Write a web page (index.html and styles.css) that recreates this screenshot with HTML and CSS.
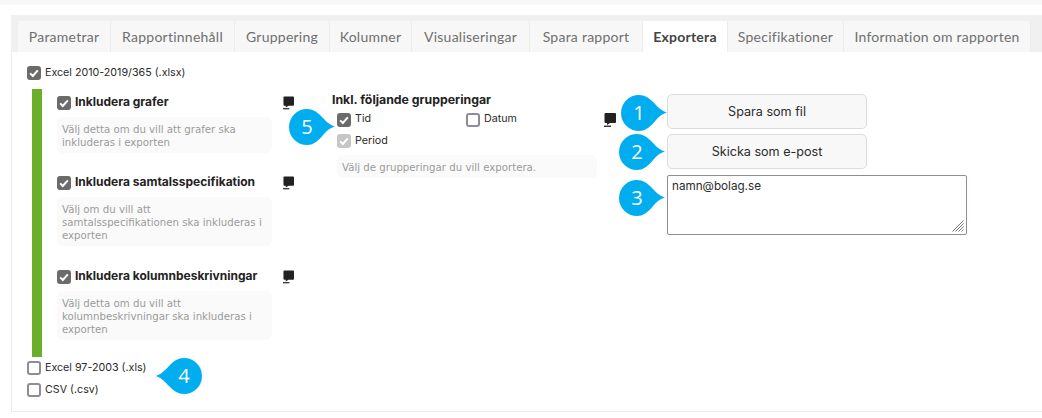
FILE: index.html
```html
<!DOCTYPE html>
<html lang="sv">
<head>
  <meta charset="UTF-8" />
  <title>Exportera rapport</title>
  <link rel="stylesheet" href="styles.css">
</head>
<body>
  <svg class="defs" width="0" height="0" aria-hidden="true">
    <symbol id="note" viewBox="0 0 12 14">
      <path d="M1.500 0h9.500a1 1 0 0 1 1 1v8a1 1 0 0 1-1 1H6L3 12V10H1.500a1 1 0 0 1-1-1V1a1 1 0 0 1 1-1z"/>
      <rect x="0" y="12.600" width="7" height="1.300"/>
    </symbol>
    <symbol id="tick" viewBox="0 0 14 14">
      <path d="M3.200 7.400l2.600 2.600 5-5.600" fill="none" stroke="#fff" stroke-width="2"/>
    </symbol>
    <symbol id="drop-right" viewBox="0 0 46 36">
      <path d="M18 0c6 0 10 3 14 7 4 4 8 9 14 10.500-6 1.500-10 6-14 11-4 4-8 7.500-14 7.500a18 18 0 0 1 0-36z"/>
    </symbol>
    <symbol id="drop-left" viewBox="0 0 46 36">
      <path d="M28 0c-6 0-10 3-14 7-4 4-8 9-14 11 6 2 10 7 14 11 4 4 8 7 14 7a18 18 0 0 0 0-36z"/>
    </symbol>
  </svg>

  <div class="topstrip"></div>

  <div class="report">
    <nav class="tabs">
      <a class="tab w-param">Parametrar</a>
      <a class="tab w-innehall">Rapportinnehåll</a>
      <a class="tab w-grupp">Gruppering</a>
      <a class="tab w-kol">Kolumner</a>
      <a class="tab w-vis">Visualiseringar</a>
      <a class="tab w-spara">Spara rapport</a>
      <a class="tab w-exp active">Exportera</a>
      <a class="tab w-spec">Specifikationer</a>
      <a class="tab w-info">Information om rapporten</a>
    </nav>

    <section class="panel">
      <label class="check format">
        <span class="box on"><svg><use href="#tick"/></svg></span>
        Excel 2010-2019/365 (.xlsx)
      </label>

      <div class="xlsx-options">
        <div class="col-includes">
          <div class="include">
            <div class="include-head">
              <label class="check strong">
                <span class="box on"><svg><use href="#tick"/></svg></span>
                Inkludera grafer
              </label>
              <svg class="note"><use href="#note"/></svg>
            </div>
            <p class="help">Välj detta om du vill att grafer ska inkluderas i exporten</p>
          </div>
          <div class="include">
            <div class="include-head">
              <label class="check strong">
                <span class="box on"><svg><use href="#tick"/></svg></span>
                Inkludera samtalsspecifikation
              </label>
              <svg class="note"><use href="#note"/></svg>
            </div>
            <p class="help">Välj om du vill att samtalsspecifikationen ska inkluderas i exporten</p>
          </div>
          <div class="include last">
            <div class="include-head">
              <label class="check strong">
                <span class="box on"><svg><use href="#tick"/></svg></span>
                Inkludera kolumnbeskrivningar
              </label>
              <svg class="note"><use href="#note"/></svg>
            </div>
            <p class="help">Välj detta om du vill att kolumnbeskrivningar ska inkluderas i exporten</p>
          </div>
        </div>

        <div class="col-groupings">
          <h3>Inkl. följande grupperingar</h3>
          <div class="grouping-checks">
            <label class="check">
              <span class="box on"><svg><use href="#tick"/></svg></span>
              Tid
            </label>
            <label class="check">
              <span class="box"></span>
              Datum
            </label>
            <label class="check format">
              <span class="box disabled"><svg><use href="#tick"/></svg></span>
              Period
            </label>
          </div>
          <p class="help wide">Välj de grupperingar du vill exportera.</p>
        </div>

        <svg class="note note-groupings"><use href="#note"/></svg>

        <div class="col-actions">
          <button class="btn" type="button">Spara som fil</button>
          <button class="btn" type="button">Skicka som e-post</button>
          <div class="mailbox">
            <span>namn@bolag.se</span>
            <svg class="grip" viewBox="0 0 12 12"><path d="M0.500 11.500l11-11M3.500 11.500l8-8M6.500 11.500l5-5M9.500 11.500l2-2" stroke="#777" fill="none"/></svg>
          </div>
        </div>
      </div>

      <div class="other-formats">
        <label class="check format">
          <span class="box"></span>
          Excel 97-2003 (.xls)
        </label>
        <label class="check format">
          <span class="box"></span>
          CSV (.csv)
        </label>
      </div>
    </section>
  </div>

  <!-- numbered callouts on top of the screenshot -->
  <div class="callout c1"><svg><use href="#drop-right"/></svg><span>1</span></div>
  <div class="callout c2"><svg><use href="#drop-right"/></svg><span>2</span></div>
  <div class="callout c3"><svg><use href="#drop-right"/></svg><span>3</span></div>
  <div class="callout flip c4"><svg><use href="#drop-left"/></svg><span>4</span></div>
  <div class="callout c5"><svg><use href="#drop-right"/></svg><span>5</span></div>
</body>
</html>
```

FILE: styles.css
```css
:root {
  --color-text: #2b2b2b;
  --color-muted: #9b9b9b;
  --color-tab: #6f6f6f;
  --color-line: #ececec;
  --color-green: #6aae2c;
  --color-blue: #00aeef;
  --font-tab: 'Lato', sans-serif;
  --font-body: 'Inter', sans-serif;
  --font-help: 'DejaVu Sans', sans-serif;
}

*, *::before, *::after {
  box-sizing: border-box;
}
body {
  margin: 0;
  position: relative;
  height: 418px;
  overflow: hidden;
  background: #fff;
  font-family: var(--font-body);
  color: var(--color-text);
}
.defs {
  position: absolute;
}

.topstrip {
  height: 5px;
  background: #f8f8f8;
}

.report {
  margin: 10px 0 0 11px;
}

.tabs {
  display: flex;
  height: 37px;
  padding: 6px 0 0 7px;
  background: #f0f0f0;
}
.tab {
  display: flex;
  align-items: center;
  justify-content: center;
  height: 31px;
  padding-bottom: 1px;
  background: #f7f7f7;
  border-right: 1px solid var(--color-line);
  font-family: var(--font-tab);
  font-size: 14px;
  letter-spacing: 0.25px;
  color: var(--color-tab);
}
.tab.active {
  background: #fff;
  color: #444;
  font-weight: 700;
}
.w-param { width: 93px; }
.w-innehall { width: 124px; }
.w-grupp { width: 95px; }
.w-kol { width: 82px; }
.w-vis { width: 118px; }
.w-spara { width: 113px; }
.w-exp { width: 85px; }
.w-spec { width: 116px; }
.w-info { width: 187px; }

.panel {
  height: 360px;
  padding: 14px 0 0 15px;
  border-left: 1px solid var(--color-line);
  border-bottom: 1px solid var(--color-line);
}

.check {
  display: flex;
  align-items: flex-start;
  gap: 4px;
  height: 14px;
  font-size: 10.7px;
  line-height: 12px;
  white-space: nowrap;
}
.check.format {
  line-height: 14px;
}
.check.strong {
  font-size: 12px;
  font-weight: 700;
  color: #222;
}
.box {
  flex: none;
  width: 14px;
  height: 14px;
  border: 2px solid #8d8b9c;
  border-radius: 3px;
  background: #fff;
}
.box svg {
  display: block;
  width: 14px;
  height: 14px;
  margin: -2px;
}
.box.on {
  background: #6b6b6b;
  border-color: #6b6b6b;
}
.box.disabled {
  background: #c6c6c6;
  border-color: #c6c6c6;
}

.help {
  margin: 0;
  padding: 6px 5px 4px;
  border-radius: 6px;
  background: #fafafa;
  font-family: var(--font-help);
  font-size: 10.2px;
  line-height: 13px;
  color: var(--color-muted);
}

.xlsx-options {
  display: flex;
  align-items: flex-start;
  height: 268px;
  margin: 9px 0 0 5px;
  padding: 7px 0 0 15px;
  border-left: 10px solid var(--color-green);
}

.col-includes {
  display: flex;
  flex-direction: column;
  gap: 23px;
  width: 238px;
  flex: none;
}
.include.last {
  margin-top: 1px;
}
.include-head {
  display: flex;
  justify-content: space-between;
  margin-bottom: 7px;
}
.include .help {
  width: 215px;
}

.note {
  flex: none;
  width: 12px;
  height: 14px;
  fill: #222;
}
.include-head .note {
  width: 11px;
  margin-right: 1px;
}

.col-groupings {
  flex: none;
  width: 265px;
  margin: -3px 0 0 37px;
}
.col-groupings h3 {
  margin: 0 0 6px;
  font-size: 12.300px;
  line-height: 14px;
  font-weight: 700;
  color: #222;
}
.grouping-checks {
  display: grid;
  grid-template-columns: 129px 1fr;
  row-gap: 7px;
  padding-left: 5px;
}
.help.wide {
  width: 260px;
  margin: 7px 0 0 5px;
}

.note-groupings {
  margin: 17px 0 0 7px;
}

.col-actions {
  display: flex;
  flex-direction: column;
  gap: 5px;
  margin: -2px 0 0 51px;
}
.btn {
  width: 200px;
  height: 35px;
  padding: 0;
  border: 1px solid #dcdcdc;
  border-radius: 5px;
  background: #f8f8f8;
  font-family: var(--font-body);
  font-size: 12.600px;
  color: var(--color-text);
}
.mailbox {
  position: relative;
  width: 300px;
  height: 60px;
  margin-top: 1px;
  padding: 3px 4px;
  border: 1px solid #8d8b9c;
  border-radius: 2px;
  font-size: 11.700px;
  line-height: 14px;
}
.grip {
  position: absolute;
  right: 2px;
  bottom: 2px;
  width: 12px;
  height: 12px;
}

.other-formats {
  display: flex;
  flex-direction: column;
  gap: 8px;
  margin-top: 4px;
}

.callout {
  position: absolute;
  width: 46px;
  height: 36px;
  color: #fff;
  font-size: 20px;
  font-family: 'Open Sans', sans-serif;
}
.callout svg {
  display: block;
  width: 46px;
  height: 36px;
  fill: var(--color-blue);
}
.callout span {
  position: absolute;
  top: 0;
  left: 0;
  width: 36px;
  line-height: 36px;
  text-align: center;
}
.callout.flip span {
  left: 10px;
}
.c1 { left: 621px; top: 95px; }
.c2 { left: 619px; top: 134px; }
.c3 { left: 619px; top: 180px; }
.c4 { left: 156px; top: 358px; }
.c5 { left: 289px; top: 109px; }
```
